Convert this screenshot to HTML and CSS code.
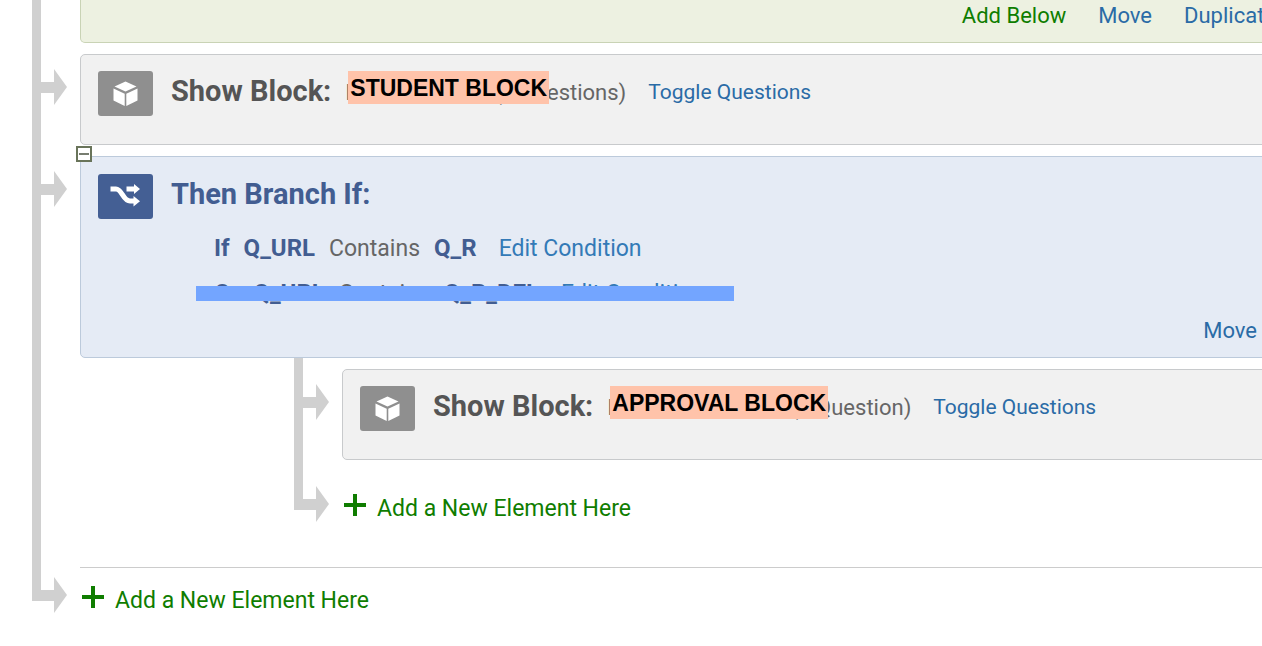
FILE: index.html
```
<!DOCTYPE html>
<html lang="en">
<head>
    <meta charset="UTF-8">
    <meta name="viewport" content="width=device-width, initial-scale=1.0">
    <title>Survey Flow</title>
    <link rel="stylesheet" href="styles.css">
</head>
<body>
    <!-- shared icons -->
    <svg class="sprite" aria-hidden="true">
        <symbol id="arrow" viewBox="0 0 35 36">
            <path d="M0 13H22V0L35 18L22 36V24H0Z" fill="#d0d0d0"/>
        </symbol>
        <symbol id="cube" viewBox="0 0 55 45">
            <path d="M27.5 10.500L38.500 15.500L27.5 20.500L16.500 15.500Z" fill="#fff"/>
            <path d="M15.500 17.500L26.700 22.700V35L15.500 29.500Z" fill="#fff"/>
            <path d="M39.500 17.500L28.300 22.700V35L39.500 29.500Z" fill="#fff"/>
        </symbol>
        <symbol id="branch" viewBox="0 0 55 45">
            <path d="M12.500 15H18C24 15 25 27 32 27H37" fill="none" stroke="#fff" stroke-width="5"/>
            <path d="M28.500 12.500H36V10L42 15L36 20V17.500H28.500Z" fill="#fff"/>
            <path d="M35.500 22L42 27.200L35.500 32.500Z" fill="#fff"/>
        </symbol>
        <symbol id="plus" viewBox="0 0 22 22">
            <path d="M11 0V22M0 11H22" fill="none" stroke="#0f7d00" stroke-width="4"/>
        </symbol>
    </svg>

    <ul class="flow">
        <li class="node">
            <div class="rail"></div>
            <div class="body body-top">
                <div class="box box-green">
                    <div class="actions">
                        <a class="add" href="#">Add Below</a>
                        <a href="#">Move</a>
                        <a href="#">Duplicate</a>
                    </div>
                </div>
            </div>
        </li>

        <li class="node">
            <div class="rail"><svg class="arrow"><use href="#arrow"/></svg></div>
            <div class="body">
                <div class="box box-gray">
                    <div class="head">
                        <svg class="icon"><use href="#cube"/></svg>
                        <h2>Show Block:</h2>
                        <span class="name name-student">
                            <span>I</span><span>(5 Questions)</span>
                            <strong class="tag">STUDENT BLOCK</strong>
                        </span>
                        <a class="toggle" href="#">Toggle Questions</a>
                    </div>
                </div>
            </div>
        </li>

        <li class="node">
            <div class="rail"><svg class="arrow"><use href="#arrow"/></svg></div>
            <div class="body">
                <div class="box box-blue">
                    <button class="collapse" type="button" aria-label="Collapse branch"></button>
                    <div class="head">
                        <svg class="icon"><use href="#branch"/></svg>
                        <h2>Then Branch If:</h2>
                    </div>
                    <div class="conditions">
                        <p class="condition"><b>If</b><b>Q_URL</b><span>Contains</span><b>Q_R</b><a href="#">Edit Condition</a></p>
                        <p class="condition struck"><b>Or</b><b>Q_URL</b><span>Contains</span><b>Q_R_DEL</b><a href="#">Edit Condition</a></p>
                    </div>
                    <div class="actions">
                        <a href="#">Move</a>
                    </div>
                </div>

                <ul class="flow nested">
                    <li class="node">
                        <div class="rail"><svg class="arrow"><use href="#arrow"/></svg></div>
                        <div class="body">
                            <div class="box box-gray">
                                <div class="head">
                                    <svg class="icon"><use href="#cube"/></svg>
                                    <h2>Show Block:</h2>
                                    <span class="name name-approval">
                                        <span>I</span><span>(1 Question)</span>
                                        <strong class="tag">APPROVAL BLOCK</strong>
                                    </span>
                                    <a class="toggle" href="#">Toggle Questions</a>
                                </div>
                            </div>
                        </div>
                    </li>
                    <li class="node last">
                        <div class="rail"><svg class="arrow"><use href="#arrow"/></svg></div>
                        <div class="body new-element">
                            <a class="add" href="#"><svg class="plus"><use href="#plus"/></svg>Add a New Element Here</a>
                        </div>
                    </li>
                </ul>
            </div>
        </li>

        <li class="node last">
            <div class="rail"><svg class="arrow"><use href="#arrow"/></svg></div>
            <div class="body new-element divided">
                <a class="add" href="#"><svg class="plus"><use href="#plus"/></svg>Add a New Element Here</a>
            </div>
        </li>
    </ul>
</body>
</html>
```
FILE: styles.css
```
* {
    box-sizing: border-box;
}

body {
    margin: 0;
    background-color: #fff;
    color: #666;
    font-family: Roboto, "Liberation Sans", sans-serif;
    font-size: 22px;
    overflow: hidden;
}

a {
    color: #2a6ba6;
    text-decoration: none;
}

a:hover {
    text-decoration: underline;
}

.add {
    color: #0f7d00;
}

.sprite {
    position: absolute;
    width: 0;
    height: 0;
}

/* Flow tree */
.flow {
    list-style: none;
    margin: 0 -32px 0 32px;
    padding: 0;
}

.nested {
    margin: 0 0 0 214px;
}

.node {
    display: flex;
}

.rail {
    flex: 0 0 48px;
    padding-top: 26px;
    background: linear-gradient(#d0d0d0, #d0d0d0) no-repeat 0 0 / 9px 100%;
}

.last > .rail {
    background-size: 9px 50px;
}

.arrow {
    display: block;
    width: 35px;
    height: 36px;
}

.body {
    flex: 1;
    min-width: 0;
    padding-top: 11px;
}

.body-top {
    padding-top: 0;
}

/* Elements */
.box {
    position: relative;
    padding: 16px 17px 28px;
    border: 1px solid #c8cacc;
    border-radius: 5px;
}

.box-green {
    padding: 0 17px 10px;
    border-color: #c9d3b5;
    border-top: none;
    border-radius: 0 0 5px 5px;
    background-color: #edf1e1;
}

.box-gray {
    background-color: #f1f1f1;
}

.box-blue {
    padding: 17px 36px 11px 17px;
    border-color: #bccadb;
    background-color: #e5ebf5;
}

.head {
    display: flex;
    align-items: flex-start;
    line-height: 43px;
    white-space: nowrap;
}

.icon {
    flex: none;
    width: 55px;
    height: 45px;
    margin-right: 18px;
    border-radius: 3px;
    background-color: #8f8f8f;
}

.box-blue .icon {
    background-color: #445f94;
}

h2 {
    margin: 0;
    color: #555;
    font-size: 29px;
    font-weight: 700;
    line-height: 40px;
}

.box-blue h2 {
    color: #425d91;
}

.name {
    position: relative;
    display: flex;
    justify-content: space-between;
    margin: 0 22px 0 14px;
}

.name-student {
    width: 281px;
}

.name-approval {
    width: 304px;
}

.tag {
    position: absolute;
    top: 0;
    left: 3px;
    padding: 2px 2px 0;
    background-color: #ffc3aa;
    color: #000;
    font-family: "Liberation Sans", Arial, sans-serif;
    font-size: 23px;
    line-height: 31px;
}

.toggle {
    font-size: 21px;
}

.actions {
    display: flex;
    justify-content: flex-end;
    gap: 32px;
    line-height: 32px;
}

.box-blue .actions {
    line-height: 30px;
}

/* Branch conditions */
.conditions {
    margin-top: 7px;
    padding-left: 116px;
}

.condition {
    position: relative;
    display: flex;
    gap: 14px;
    margin: 0;
    font-size: 23px;
    line-height: 45px;
    white-space: nowrap;
}

.condition b {
    color: #425d91;
    font-size: 24px;
}

.condition a {
    margin-left: 8px;
    color: #337ab7;
}

.struck::after {
    content: "";
    position: absolute;
    top: 15px;
    left: -18px;
    width: 538px;
    height: 15px;
    background-color: #73a5ff;
}

.collapse {
    position: absolute;
    top: -11px;
    left: -5px;
    width: 16px;
    height: 16px;
    padding: 0;
    border: 2px solid #69745a;
    background: linear-gradient(#777d70, #777d70) no-repeat center / 10px 2px #fff;
    cursor: pointer;
}

/* Add links */
.new-element {
    height: 91px;
    padding-top: 32px;
    font-size: 23px;
    line-height: 34px;
}

.new-element .add {
    display: inline-flex;
    align-items: center;
    gap: 11px;
    padding-left: 2px;
}

.divided {
    height: auto;
    margin-top: 16px;
    padding-top: 16px;
    border-top: 1px solid #ccc;
}

.plus {
    width: 22px;
    height: 22px;
    margin-bottom: 8px;
}
```
